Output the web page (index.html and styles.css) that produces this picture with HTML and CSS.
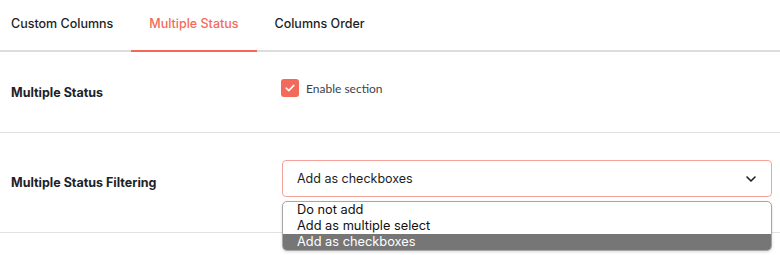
FILE: index.html
```html
<!DOCTYPE html>
<html lang="en">
<head>
    <meta charset="UTF-8">
    <meta name="viewport" content="width=device-width, initial-scale=1.0">
    <title>Multiple Status</title>
    <link rel="stylesheet" href="styles.css">
</head>
<body>
    <div class="tabs">
        <a class="tab">Custom Columns</a>
        <a class="tab active">Multiple Status</a>
        <a class="tab">Columns Order</a>
    </div>

    <div class="setting-row">
        <div class="setting-label">Multiple Status</div>
        <div class="setting-field">
            <label class="check">
                <span class="check-box">
                    <svg width="10" height="8" viewBox="0 0 10 8"><path d="M1.2 4.2 L3.8 6.6 L8.8 1.4" fill="none" stroke="#fff" stroke-width="1.6" stroke-linecap="round" stroke-linejoin="round"/></svg>
                </span>
                Enable section
            </label>
        </div>
    </div>

    <div class="setting-row">
        <div class="setting-label">Multiple Status Filtering</div>
        <div class="setting-field">
            <div class="select">
                <span>Add as checkboxes</span>
                <svg class="chevron" width="10" height="6" viewBox="0 0 10 6"><path d="M1 1 L5 5 L9 1" fill="none" stroke="#1e1e1e" stroke-width="1.6" stroke-linecap="round" stroke-linejoin="round"/></svg>
                <ul class="options">
                    <li>Do not add</li>
                    <li>Add as multiple select</li>
                    <li class="selected">Add as checkboxes</li>
                </ul>
            </div>
        </div>
    </div>
</body>
</html>
```

FILE: styles.css
```css
html,
body {
    min-height: 100vh;
}

body {
    margin: 0;
    font-family: Inter, "Liberation Sans", sans-serif;
    font-size: 12.5px;
    color: #1e1e1e;
    background-color: #fff;
}

.tabs {
    display: flex;
    height: 50px;
    border-bottom: 2px solid #dcdcde;
}

.tab {
    display: flex;
    align-items: center;
    padding: 0 18px 4px;
    font-weight: 500;
    color: #1e1e1e;
    cursor: pointer;
    margin-bottom: -2px;
    border-bottom: 2px solid transparent;
}

.tab:first-child {
    padding-left: 11px;
}

.tab.active {
    color: #f46a5a;
    border-bottom-color: #f46a5a;
}

.setting-row {
    display: grid;
    grid-template-columns: 271px 1fr;
    padding: 0 8px 0 11px;
    border-bottom: 1px solid #e2e2e2;
}

.setting-label {
    align-self: center;
    font-weight: 700;
    color: #1d2327;
}

.setting-field {
    padding: 27px 0 35px;
}

.check {
    display: flex;
    align-items: center;
    gap: 7px;
    height: 18px;
    margin-left: -1px;
    font-family: Lato, "Noto Sans", sans-serif;
    font-size: 12px;
    color: #3c434a;
}

.check-box {
    display: flex;
    align-items: center;
    justify-content: center;
    width: 18px;
    height: 18px;
    border-radius: 3px;
    background-color: #f46a5a;
}

.select {
    position: relative;
    display: flex;
    align-items: center;
    justify-content: space-between;
    height: 35px;
    padding: 0 14px;
    border: 1px solid #f4a199;
    border-radius: 4px;
}

.chevron {
    margin-right: 1px;
}

.options {
    position: absolute;
    top: 40px;
    left: -1px;
    right: -1px;
    margin: 0;
    padding: 0;
    list-style: none;
    background-color: #fff;
    border: 1px solid #a7a7a7;
    border-radius: 5px;
    overflow: hidden;
    box-shadow: 0 1px 3px rgba(0, 0, 0, 0.15);
    font-size: 12.8px;
    color: #111;
}

.options li {
    height: 16px;
    line-height: 16px;
    padding: 0 14px;
}

.options li.selected {
    background-color: #767676;
    color: #fff;
}
```
